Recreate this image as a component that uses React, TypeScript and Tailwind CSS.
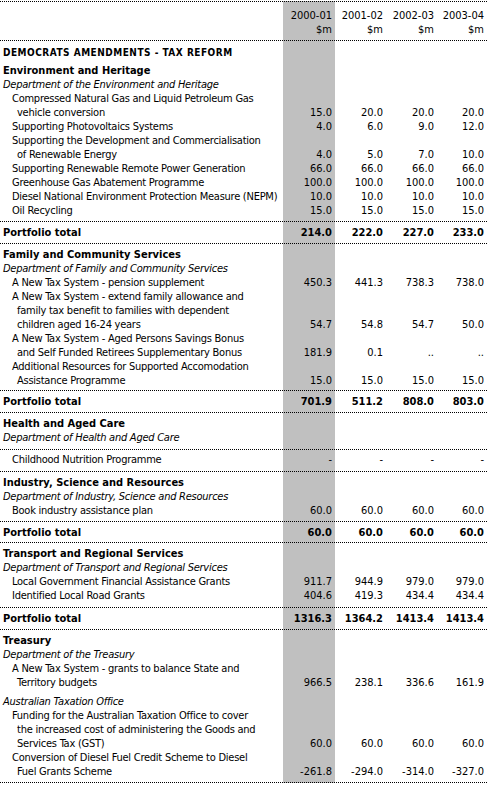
import clsx from "clsx";

type Vals = [string, string, string, string];

const COLS = "grid grid-cols-[283px_52px_51px_51px_50px]";

function Block({ className, children }: { className?: string; children: React.ReactNode }) {
  return <div className={clsx("border-b border-dotted border-black", className)}>{children}</div>;
}

function Values({ values }: { values?: Vals }) {
  return (
    <>
      {[0, 1, 2, 3].map((i) => (
        <div key={i} className="flex items-end justify-end pr-[3px] whitespace-nowrap">
          {values ? values[i] : ""}
        </div>
      ))}
    </>
  );
}

function Heading({ children }: { children: React.ReactNode }) {
  return <div className="pl-[3px] text-[11px] font-bold whitespace-nowrap">{children}</div>;
}

function Dept({ children }: { children: React.ReactNode }) {
  return <div className="pl-[3px] italic tracking-[-0.25px] whitespace-nowrap">{children}</div>;
}

function Item({ lines, values }: { lines: string[]; values?: Vals }) {
  return (
    <div className={COLS}>
      <div className="pl-[12px] tracking-[-0.25px] whitespace-nowrap">
        {lines.map((l, i) => (
          <div key={l} className={i ? "pl-[5px]" : ""}>
            {l}
          </div>
        ))}
      </div>
      <Values values={values} />
    </div>
  );
}

function Total({ values, className }: { values: Vals; className?: string }) {
  return (
    <Block className={className ?? "pt-[4px] pb-[3px]"}>
      <div className={clsx(COLS, "text-[11px] font-bold")}>
        <div className="pl-[3px]">Portfolio total</div>
        <Values values={values} />
      </div>
    </Block>
  );
}

export default function App() {
  return (
    <div className="min-h-screen bg-white pt-[1px] text-black">
      <div className="w-[487px] bg-[linear-gradient(to_right,transparent_283px,#c0c0c0_283px,#c0c0c0_335px,transparent_335px)] font-['DejaVu_Sans_Condensed','Liberation_Sans',sans-serif] text-[11px] leading-[14px]">
        {/* column heads */}
        <div className={clsx(COLS, "border-y border-dotted border-black")}>
          <div />
          {["2000-01", "2001-02", "2002-03", "2003-04"].map((y) => (
            <div key={y} className="pt-[7px] pb-[3px] pr-[3px] text-right">
              <div>{y}</div>
              <div>$m</div>
            </div>
          ))}
        </div>

        <Block className="pt-[5px] pb-[3px]">
          <div className="pl-[3px] pb-[4px] text-[10px] font-bold tracking-[0.5px] whitespace-nowrap">
            DEMOCRATS AMENDMENTS - TAX REFORM
          </div>
          <Heading>Environment and Heritage</Heading>
          <Dept>Department of the Environment and Heritage</Dept>
          <Item
            lines={["Compressed Natural Gas and Liquid Petroleum Gas", "vehicle conversion"]}
            values={["15.0", "20.0", "20.0", "20.0"]}
          />
          <Item lines={["Supporting Photovoltaics Systems"]} values={["4.0", "6.0", "9.0", "12.0"]} />
          <Item
            lines={["Supporting the Development and Commercialisation", "of Renewable Energy"]}
            values={["4.0", "5.0", "7.0", "10.0"]}
          />
          <Item lines={["Supporting Renewable Remote Power Generation"]} values={["66.0", "66.0", "66.0", "66.0"]} />
          <Item lines={["Greenhouse Gas Abatement Programme"]} values={["100.0", "100.0", "100.0", "100.0"]} />
          <Item
            lines={["Diesel National Environment Protection Measure (NEPM)"]}
            values={["10.0", "10.0", "10.0", "10.0"]}
          />
          <Item lines={["Oil Recycling"]} values={["15.0", "15.0", "15.0", "15.0"]} />
        </Block>
        <Total values={["214.0", "222.0", "227.0", "233.0"]} />

        <Block className="pt-[4px] pb-[2px]">
          <Heading>Family and Community Services</Heading>
          <Dept>Department of Family and Community Services</Dept>
          <Item lines={["A New Tax System - pension supplement"]} values={["450.3", "441.3", "738.3", "738.0"]} />
          <Item
            lines={[
              "A New Tax System - extend family allowance and",
              "family tax benefit to families with dependent",
              "children aged 16-24 years",
            ]}
            values={["54.7", "54.8", "54.7", "50.0"]}
          />
          <Item
            lines={["A New Tax System - Aged Persons Savings Bonus", "and Self Funded Retirees Supplementary Bonus"]}
            values={["181.9", "0.1", "..", ".."]}
          />
          <Item
            lines={["Additional Resources for Supported Accomodation", "Assistance Programme"]}
            values={["15.0", "15.0", "15.0", "15.0"]}
          />
        </Block>
        <Total values={["701.9", "511.2", "808.0", "803.0"]} />

        <Block className="pt-[4px] pb-[4px]">
          <Heading>Health and Aged Care</Heading>
          <Dept>Department of Health and Aged Care</Dept>
        </Block>
        <Block className="pt-[3px] pb-[4px]">
          <Item lines={["Childhood Nutrition Programme"]} values={["-", "-", "-", "-"]} />
        </Block>

        <Block className="pt-[4px] pb-[3px]">
          <Heading>Industry, Science and Resources</Heading>
          <Dept>Department of Industry, Science and Resources</Dept>
          <Item lines={["Book industry assistance plan"]} values={["60.0", "60.0", "60.0", "60.0"]} />
        </Block>
        <Total values={["60.0", "60.0", "60.0", "60.0"]} className="pt-[4px] pb-[2px]" />

        <Block className="pt-[4px] pb-[4px]">
          <Heading>Transport and Regional Services</Heading>
          <Dept>Department of Transport and Regional Services</Dept>
          <Item
            lines={["Local Government Financial Assistance Grants"]}
            values={["911.7", "944.9", "979.0", "979.0"]}
          />
          <Item lines={["Identified Local Road Grants"]} values={["404.6", "419.3", "434.4", "434.4"]} />
        </Block>
        <Total values={["1316.3", "1364.2", "1413.4", "1413.4"]} />

        <Block className="pt-[4px] pb-[3px]">
          <Heading>Treasury</Heading>
          <Dept>Department of the Treasury</Dept>
          <Item
            lines={["A New Tax System - grants to balance State and", "Territory budgets"]}
            values={["966.5", "238.1", "336.6", "161.9"]}
          />
          <div className="pt-[5px]">
            <Dept>Australian Taxation Office</Dept>
          </div>
          <Item
            lines={[
              "Funding for the Australian Taxation Office to cover",
              "the increased cost of administering the Goods and",
              "Services Tax (GST)",
            ]}
            values={["60.0", "60.0", "60.0", "60.0"]}
          />
          <Item
            lines={["Conversion of Diesel Fuel Credit Scheme to Diesel", "Fuel Grants Scheme"]}
            values={["-261.8", "-294.0", "-314.0", "-327.0"]}
          />
        </Block>
      </div>
    </div>
  );
}
